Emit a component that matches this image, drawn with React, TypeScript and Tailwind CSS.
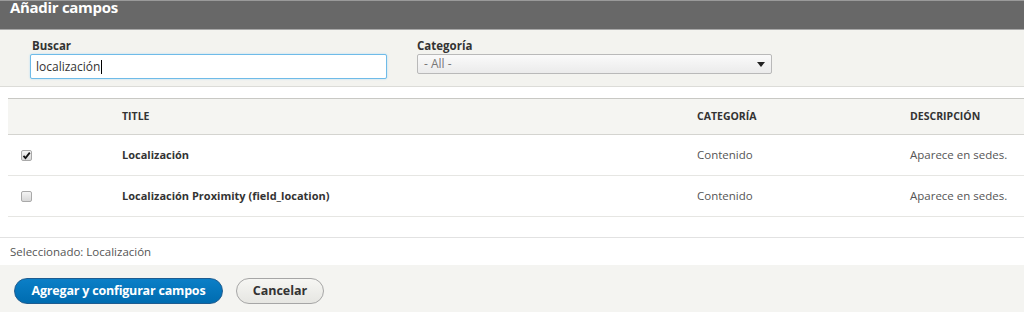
import React from "react";

const font = { fontFamily: '"Open Sans", "Noto Sans", "DejaVu Sans", sans-serif' };

function Check({ checked }: { checked: boolean }) {
  return (
    <span className="inline-flex h-[11px] w-[11px] items-center justify-center rounded-[2px] border border-[#a9a9a9] bg-gradient-to-b from-[#f4f4f4] to-[#d8d8d8]">
      {checked && (
        <svg width="9" height="9" viewBox="0 0 9 9">
          <path d="M1.5 4.8 L3.5 7 L7.8 1.6" fill="none" stroke="#111" strokeWidth="1.8" />
        </svg>
      )}
    </span>
  );
}

function Row({ checked, title }: { checked: boolean; title: string }) {
  return (
    <div className="flex h-[41px] items-center border-b border-[#e6e6e3] text-[11.5px]">
      <div className="w-[114px] pl-[13px] flex items-center">
        <Check checked={checked} />
      </div>
      <div className="w-[575px] text-[11px] font-bold text-[#333]">{title}</div>
      <div className="w-[213px] text-[#555]">Contenido</div>
      <div className="flex-1 text-[#555]">Aparece en sedes.</div>
    </div>
  );
}

export default function App() {
  return (
    <div className="w-[1024px] h-[312px] overflow-hidden bg-white" style={font}>
      <div className="h-[30px] border-t border-[#9a9a9a] bg-[#686868] border-b border-b-[#a8a8a8]">
        <div className="pl-[10px] -mt-[4px] text-[15px] font-bold leading-[20px] text-white tracking-[-0.3px]">
          Añadir campos
        </div>
      </div>
      <div className="flex h-[57px] gap-[30px] border-b border-[#dcdcd8] bg-[#f3f3ef] pl-[30px] pt-[7px]">
        <div className="flex flex-col">
          <label className="pl-[2px] text-[11.5px] font-bold leading-[17px] text-[#333]">Buscar</label>
          <div className="flex h-[25px] w-[357px] items-center rounded-[2px] border border-[#6fbbe8] bg-white pl-[5px] text-[12px] text-[#333] shadow-[0_0_2px_#a8d8f5]">
            localización
            <span className="ml-[1px] h-[14px] w-[1px] bg-black" />
          </div>
        </div>
        <div className="flex flex-col">
          <label className="text-[11.5px] font-bold leading-[17px] text-[#333]">Categoría</label>
          <div className="flex h-[20px] w-[355px] items-center justify-between rounded-[2px] border border-[#b9b9b9] bg-gradient-to-b from-[#fafafa] to-[#ebebeb] pl-[6px] pr-[6px] text-[12px] text-[#777]">
            <span>- All -</span>
            <svg width="8" height="5" viewBox="0 0 8 5">
              <path d="M0 0 H8 L4 5 Z" fill="#222" />
            </svg>
          </div>
        </div>
      </div>
      <div className="h-[11px]" />
      <div className="ml-[8px] border-t border-[#c8c8c4]">
        <div className="flex h-[36px] items-center border-b border-[#d4d4d0] bg-[#f5f5f2] text-[10.5px] font-bold uppercase text-[#333]">
          <div className="w-[114px]" />
          <div className="w-[575px]">Title</div>
          <div className="w-[213px]">Categoría</div>
          <div className="flex-1">Descripción</div>
        </div>
        <Row checked title="Localización" />
        <Row checked={false} title="Localización Proximity (field_location)" />
      </div>
      <div className="h-[20px]" />
      <div className="flex h-[28px] items-center border-t border-[#e2e2e2] pl-[10px] pt-[1px] text-[11.5px] text-[#555]">
        Seleccionado: Localización
      </div>
      <div className="flex h-[47px] items-start gap-[13px] bg-[#f4f4f1] pl-[14px] pt-[13px]">
        <button className="h-[26px] w-[209px] rounded-full border border-[#1e5c90] bg-gradient-to-b from-[#0b7fc7] to-[#006cb0] text-[12.5px] font-bold text-white tracking-[-0.2px]">
          Agregar y configurar campos
        </button>
        <button className="h-[26px] w-[88px] rounded-full border border-[#a6a6a6] bg-gradient-to-b from-[#f6f6f3] to-[#e6e6e2] text-[12.5px] font-bold text-[#333]">
          Cancelar
        </button>
      </div>
    </div>
  );
}
